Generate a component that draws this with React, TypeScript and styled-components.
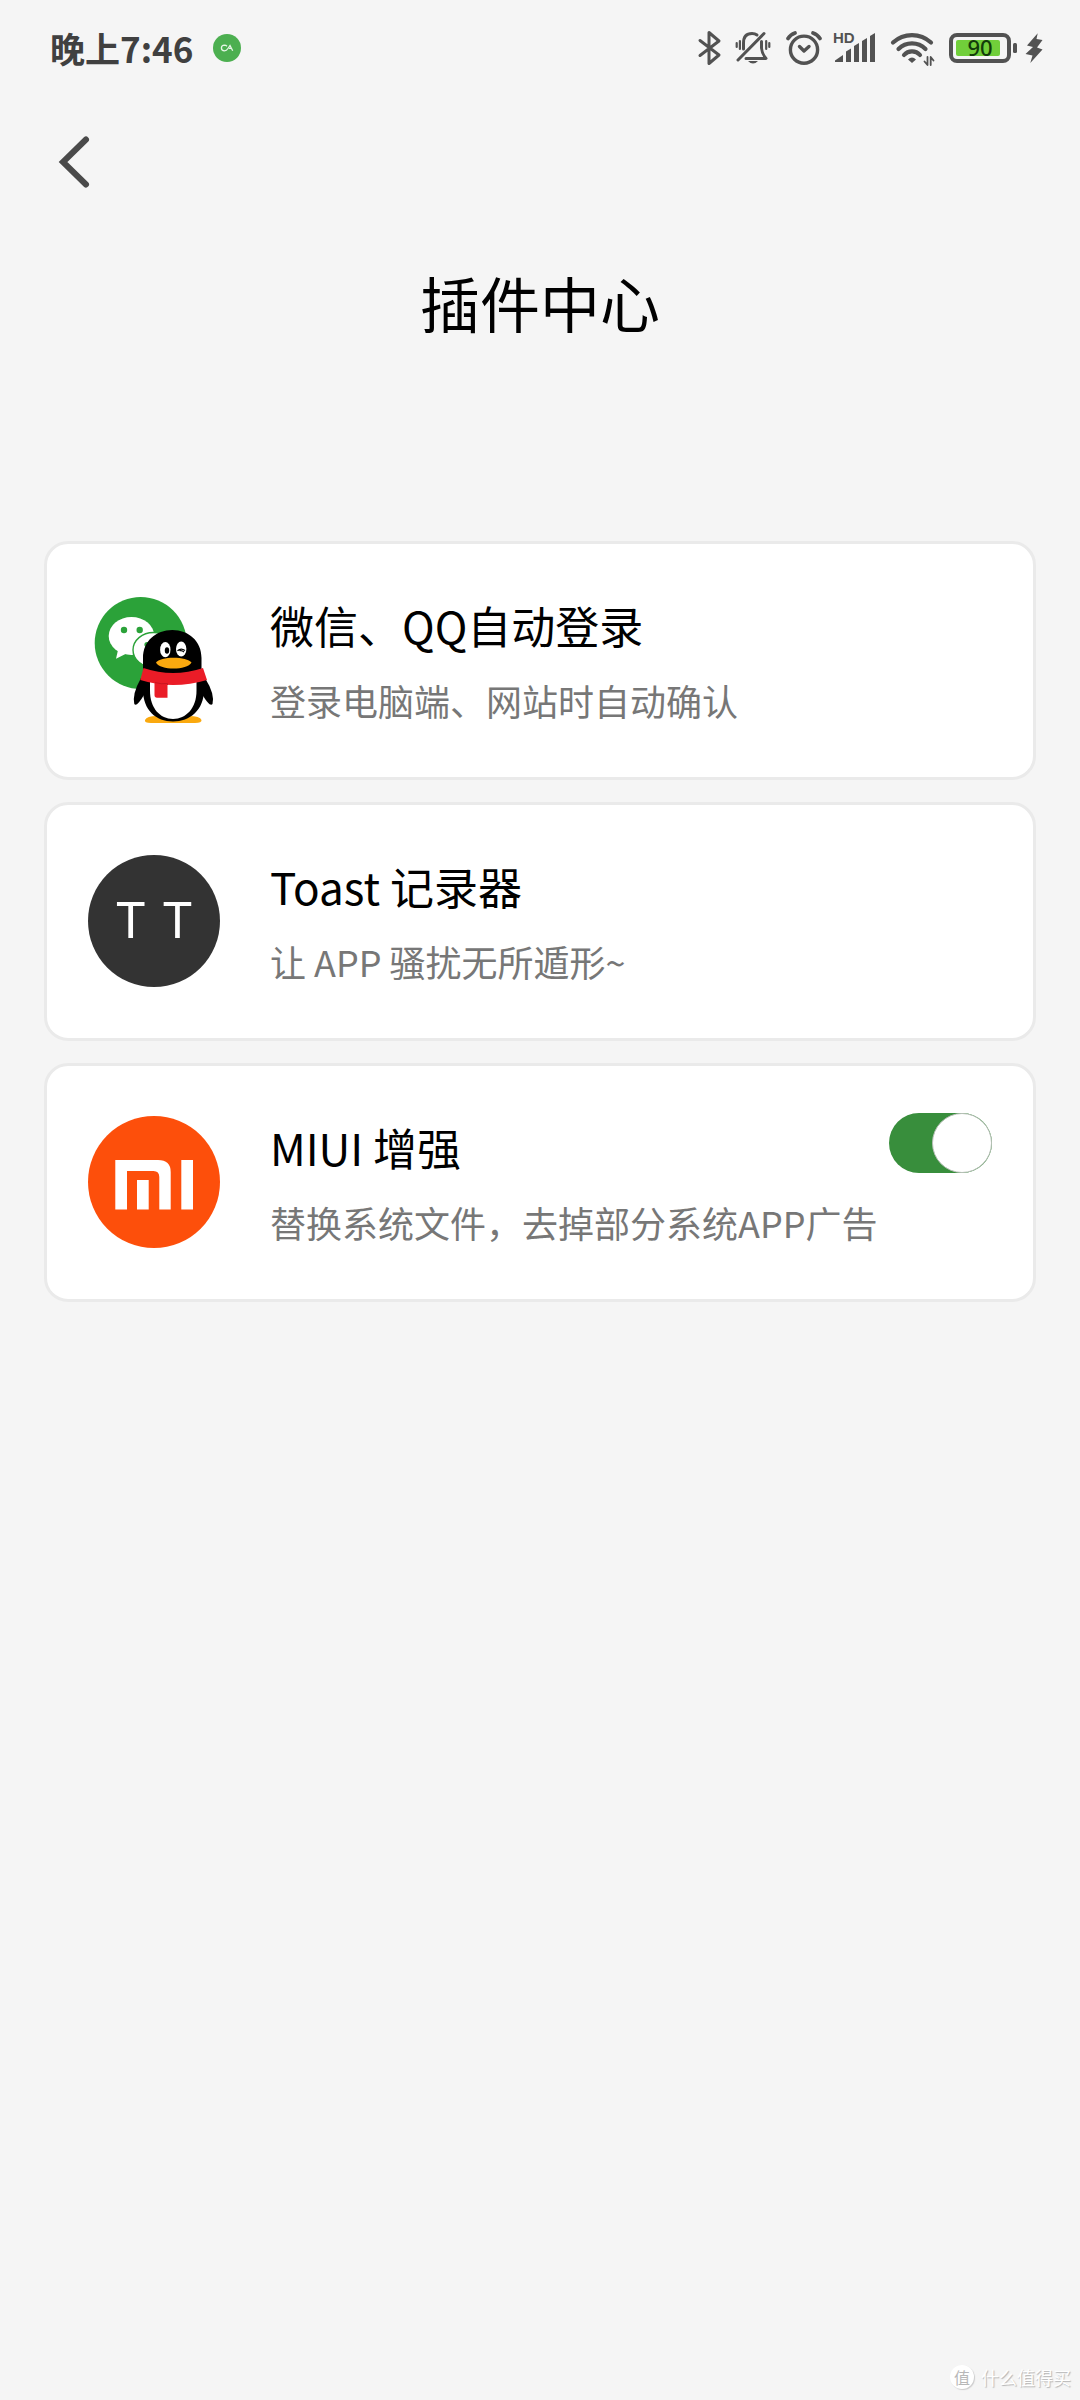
import { useState } from "react";
import type { ReactNode } from "react";
import styled, { createGlobalStyle } from "styled-components";

const GlobalStyle = createGlobalStyle`
	*,
	*::before {
		box-sizing: border-box;
		margin: 0;
		padding: 0;
	}

	body {
		background: #f5f5f5;
		color: #000;
		font-family: "Noto Sans CJK SC", sans-serif;
	}
`;

const Page = styled.div`
	display: flex;
	flex-direction: column;
	min-height: 100vh;
`;

const StatusBar = styled.header`
	display: flex;
	align-items: center;
	justify-content: space-between;
	height: 96px;
	padding: 0 35px 0 50px;
	color: #404040;
`;

const StatusGroup = styled.div<{ $gap: number }>`
	display: flex;
	align-items: center;
	column-gap: ${({ $gap }) => $gap}px;
`;

const Clock = styled.time`
	font-size: 35px;
	font-weight: 700;
	line-height: 40px;
`;

const StatusIcon = styled.svg`
	display: block;
	height: 40px;
	fill: none;
	stroke: #525252;
	stroke-linecap: round;
	stroke-linejoin: round;
`;

const NavBar = styled.nav`
	display: flex;
	align-items: center;
	height: 132px;
	padding: 0 48px;
`;

const BackButton = styled.button`
	display: flex;
	background: none;
	border: none;
	cursor: pointer;
`;

const PageTitle = styled.h1`
	margin: 32px 0 197px;
	font-size: 60px;
	font-weight: 400;
	line-height: 84px;
	text-align: center;
`;

const PluginList = styled.ul`
	display: flex;
	flex-direction: column;
	row-gap: 22px;
	padding: 0 44px;
	list-style: none;
`;

const PluginCard = styled.li`
	display: flex;
	align-items: flex-start;
	padding: 47px 41px 48px;
	background: #fff;
	border: 3px solid #eaeaea;
	border-radius: 24px;
`;

const IconSlot = styled.div`
	display: flex;
	flex: none;
	align-self: center;
	margin-right: 50px;
`;

const PluginText = styled.div`
	display: flex;
	flex: 1;
	flex-direction: column;
	row-gap: 12px;
	min-width: 0;
`;

const PluginName = styled.h2`
	font-size: 44px;
	font-weight: 400;
	line-height: 68px;
`;

const PluginSummary = styled.p`
	color: #777;
	font-size: 36px;
	line-height: 58px;
	white-space: nowrap;
`;

const LetterIcon = styled.div`
	display: flex;
	align-items: center;
	justify-content: center;
	column-gap: 17px;
	width: 132px;
	height: 132px;
	border-radius: 50%;
	background: #333;
	color: #fff;
	font-family: Roboto, sans-serif;
	font-size: 50px;
`;

const Switch = styled.input`
	flex: none;
	display: flex;
	width: 103px;
	height: 60px;
	border-radius: 30px;
	background: #bdbdbd;
	appearance: none;
	cursor: pointer;

	&::before {
		content: "";
		width: 60px;
		height: 60px;
		border: 1px solid #b8c0b8;
		border-radius: 50%;
		background: #fff;
	}

	&:checked {
		justify-content: flex-end;
		background: #388e3c;
	}
`;

const Watermark = styled.footer`
	display: flex;
	align-items: center;
	justify-content: flex-end;
	column-gap: 7px;
	margin-top: auto;
	padding: 0 9px 9px;
	color: #fff;
	font-size: 18px;
	line-height: 28px;
	text-shadow: 1px 1px 1px #b4b4b4;
`;

const WatermarkBadge = styled.span`
	display: flex;
	align-items: center;
	justify-content: center;
	width: 24px;
	height: 24px;
	border-radius: 50%;
	background: #fff;
	box-shadow: 1px 1px 1px #ccc;
	color: #b8b8b8;
	font-size: 16px;
	text-shadow: none;
`;

const AppBadge = () => (
	<svg width="28" height="28" viewBox="0 0 28 28" fill="none" stroke="#e6f5e6" strokeWidth="1.3">
		<circle cx="14" cy="14" r="14" fill="#4caf50" stroke="none" />
		<path d="M14 12.2Q13 11.2 11.5 11.2Q8.4 11.3 8.4 14T11.5 16.8Q13.5 16.8 15 14.5L17 11.5L19.7 16.8M16 14.4H18.5" />
	</svg>
);

const BluetoothIcon = () => (
	<StatusIcon width="31" viewBox="0 0 31 40" strokeWidth="3">
		<path d="M4 12.5L23 27L13 35.5V4.5L23 13L4 27.5" />
	</StatusIcon>
);

const MutedBellIcon = () => (
	<StatusIcon width="36" viewBox="0 0 36 40" strokeWidth="3">
		<path d="M29 5.5L3 32" />
		<path d="M8.5 21V15C8.5 8.5 12 5.5 17 5.5Q20 5.5 22 7" />
		<path d="M26.5 13.5V20Q27 26 31 30.5H11" />
		<path d="M13 33H23Q18 38 13 33Z" fill="#525252" stroke="none" />
		<path d="M1.7 15V19M4.9 13V21M31.2 13V21M34.3 15V19" strokeWidth="2.2" />
	</StatusIcon>
);

const AlarmIcon = () => (
	<StatusIcon width="46" viewBox="0 0 46 40" strokeWidth="3.4">
		<circle cx="25" cy="21.7" r="13.6" />
		<path d="M20.5 18.5L25 23L30 18.5" />
		<path d="M9 10.5Q11.5 6.5 16 5M34 5Q38.5 6.5 41 10.5" strokeWidth="3.8" />
	</StatusIcon>
);

const SignalIcon = () => (
	<StatusIcon width="42" viewBox="0 0 42 40">
		<g fill="#525252" stroke="none">
			<path d="M2 34V32.5L10 27V34Z" />
			<path d="M13 34V23.5L18 20.5V34Z" />
			<path d="M21 34V18L26 15V34Z" />
			<path d="M29 34V13L34 10V34Z" />
			<path d="M37 34V8L42 5V34Z" />
			<text x="0" y="15" fontFamily="Liberation Sans, sans-serif" fontSize="15" fontWeight="700">
				HD
			</text>
		</g>
	</StatusIcon>
);

const WifiIcon = () => (
	<StatusIcon width="58" viewBox="0 0 58 40" strokeWidth="4.2">
		<path d="M10 14.5A28 28 0 0 1 48 14.5" />
		<path d="M15.5 21A19 19 0 0 1 42.5 21" />
		<path d="M21 27A10.5 10.5 0 0 1 37 27" />
		<path d="M25 31.5Q29 27.5 33 31.5L29 35Z" fill="#525252" stroke="none" />
		<path d="M44.5 29V37L41.5 33.5M47.7 37V29L50.5 32.5" strokeWidth="1.8" />
	</StatusIcon>
);

const BatteryIcon = () => (
	<StatusIcon width="68" viewBox="0 0 68 40" strokeWidth="4">
		<rect x="2" y="7" width="58" height="26" rx="6" />
		<rect x="7" y="12" width="44" height="16" rx="2" fill="#71cf3a" stroke="none" />
		<rect x="64" y="15" width="4" height="10" rx="1.5" fill="#525252" stroke="none" />
		<text
			x="31"
			y="28"
			fill="#123c0a"
			stroke="none"
			fontFamily="Noto Sans, sans-serif"
			fontSize="22"
			fontWeight="500"
			textAnchor="middle">
			90
		</text>
	</StatusIcon>
);

const ChargingIcon = () => (
	<StatusIcon width="20" viewBox="0 0 20 40">
		<path
			d="M12.7 5.3L2 17.5L8 19L0.5 26L7.5 27.5L5.3 35L17.5 21.5L12 19.5L17.5 12L11.5 11Z"
			fill="#525252"
			stroke="none"
		/>
	</StatusIcon>
);

const WechatQqIcon = () => (
	<svg width="132" height="132" viewBox="5 0 132 132">
		<circle cx="57.7" cy="49" r="46" fill="#2ba239" />
		{/* chat bubbles */}
		<ellipse cx="48.5" cy="42" rx="22.8" ry="19" fill="#fff" />
		<path d="M35.5 54L33 64.7L43.5 59.5Z" fill="#fff" />
		<circle cx="41" cy="36" r="3.2" fill="#2ba239" />
		<circle cx="56.7" cy="36" r="3.2" fill="#2ba239" />
		<ellipse cx="70.5" cy="56" rx="20.5" ry="17.5" fill="#fff" stroke="#2ba239" strokeWidth="1.4" />
		<circle cx="64" cy="50.5" r="2.6" fill="#2ba239" />
		{/* penguin */}
		<path d="M62 126Q64 121.5 76 122H103Q117 121.5 118.5 126Q119 129 112 129H68Q61 129 62 126Z" fill="#faa90f" />
		<path d="M58 84Q49 100 51.3 110Q53.5 113.5 61 101L66 86Z" />
		<path d="M122 84Q132 100 129.5 110Q127 113.5 119.5 101L114 86Z" />
		<path d="M60 78V64C60 47 73 36 89.3 36S118.5 47 118.5 64V78L121 96C121 116 107 127.5 90 127.5S60 116 60 96Z" />
		<path d="M67 84V97C67 114 77 125 90 125S113.5 114 113.5 97V84Z" fill="#fff" />
		<path d="M60.5 74Q90 84 120 74L124 86Q90 96 57.3 86Z" fill="#ea1c27" />
		<path d="M71.5 87H84.5V103.7H74Q71.5 103.7 71.5 101Z" fill="#ea1c27" />
		<path d="M72 88.5Q78 90.5 84.5 89.5V91" fill="none" stroke="#c9141f" strokeWidth="1" />
		<ellipse cx="82.3" cy="55.7" rx="5.2" ry="7.6" fill="#fff" />
		<ellipse cx="98.2" cy="55" rx="5.2" ry="7.6" fill="#fff" />
		<ellipse cx="84" cy="56.5" rx="2.2" ry="3.2" />
		<path d="M94.5 56.8Q98 53.5 102 56.5M96.5 56.8Q99 56 101 58" fill="none" stroke="#000" strokeWidth="1.2" />
		<path d="M73 68.5C77 62 104 62 108.5 68.5C104 76.5 77 76.5 73 68.5Z" fill="#faa90f" />
	</svg>
);

const MiIcon = () => (
	<svg width="132" height="132" viewBox="0 0 132 132">
		<circle cx="66" cy="66" r="66" fill="#fd4f0b" />
		<g fill="#fff">
			<path d="M27.3 44H70Q82.7 44 82.7 56V93.5H71.3V61Q71.3 55 65.5 55H39V93.5H27.3Z" />
			<path d="M49 64H60.7V93.5H49Z" />
			<path d="M93.3 44H105V93.5H93.3Z" />
		</g>
	</svg>
);

interface PluginProps {
	icon: ReactNode;
	name: string;
	summary: string;
	children?: ReactNode;
}

const Plugin: React.FC<PluginProps> = ({ icon, name, summary, children }) => (
	<PluginCard>
		<IconSlot>{icon}</IconSlot>
		<PluginText>
			<PluginName>{name}</PluginName>
			<PluginSummary>{summary}</PluginSummary>
		</PluginText>
		{children}
	</PluginCard>
);

const App: React.FC = () => {
	const [miuiEnabled, setMiuiEnabled] = useState(true);

	return (
		<>
			<GlobalStyle />
			<Page>
				<StatusBar>
					<StatusGroup $gap={20}>
						<Clock>晚上7:46</Clock>
						<AppBadge />
					</StatusGroup>
					<StatusGroup $gap={8}>
						<BluetoothIcon />
						<MutedBellIcon />
						<AlarmIcon />
						<SignalIcon />
						<WifiIcon />
						<BatteryIcon />
						<ChargingIcon />
					</StatusGroup>
				</StatusBar>
				<NavBar>
					<BackButton aria-label="返回">
						<svg width="54" height="60" viewBox="0 0 54 60" fill="none" stroke="#4a4a4a" strokeWidth="6">
							<path d="M38 7.5L15 30L38 52.500" strokeLinecap="round" />
						</svg>
					</BackButton>
				</NavBar>
				<main>
					<PageTitle>插件中心</PageTitle>
					<PluginList>
						<Plugin icon={<WechatQqIcon />} name="微信、QQ自动登录" summary="登录电脑端、网站时自动确认" />
						<Plugin
							icon={
								<LetterIcon>
									<span>T</span>
									<span>T</span>
								</LetterIcon>
							}
							name="Toast 记录器"
							summary="让 APP 骚扰无所遁形~"
						/>
						<Plugin icon={<MiIcon />} name="MIUI 增强" summary="替换系统文件，去掉部分系统APP广告">
							<Switch
								type="checkbox"
								aria-label="MIUI 增强"
								checked={miuiEnabled}
								onChange={(e) => setMiuiEnabled(e.target.checked)}
							/>
						</Plugin>
					</PluginList>
				</main>
				<Watermark>
					<WatermarkBadge>值</WatermarkBadge>
					什么值得买
				</Watermark>
			</Page>
		</>
	);
};

export default App;
